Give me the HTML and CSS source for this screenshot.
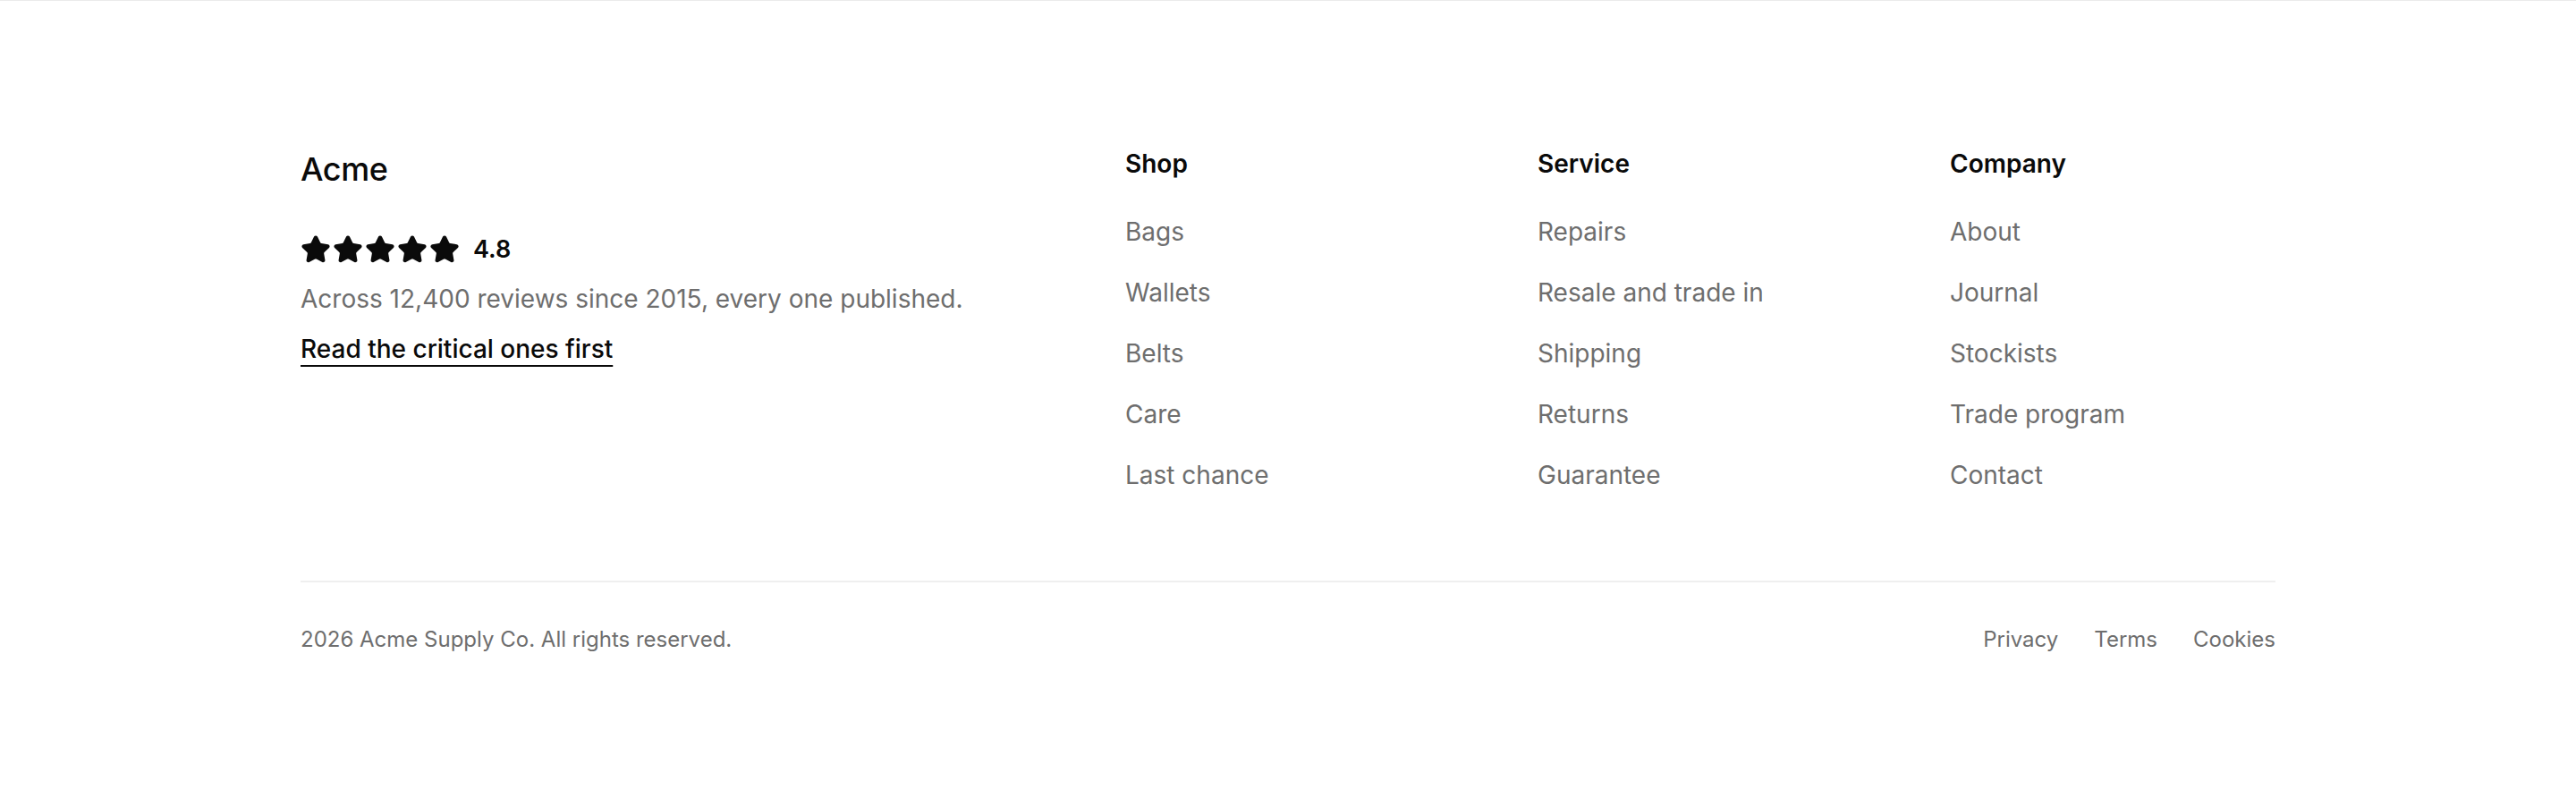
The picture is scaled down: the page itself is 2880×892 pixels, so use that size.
FILE: index.html
```html
<!DOCTYPE html>
<html lang="en">
<head>
<meta charset="utf-8">
<title>Acme footer</title>
<link rel="stylesheet" href="styles.css">
</head>
<body>
<footer class="footer">
  <div class="container">
    <div class="top">
      <div class="brand">
        <div class="logo">Acme</div>
        <div class="rating">
          <div class="stars">
            <svg class="star" viewBox="0 0 24 24"><path d="M11.525 2.295a.53.53 0 0 1 .95 0l2.31 4.679a2.123 2.123 0 0 0 1.595 1.16l5.166.756a.53.53 0 0 1 .294.904l-3.736 3.638a2.123 2.123 0 0 0-.611 1.878l.882 5.14a.53.53 0 0 1-.771.56l-4.618-2.428a2.122 2.122 0 0 0-1.973 0L6.396 21.01a.53.53 0 0 1-.77-.56l.881-5.139a2.122 2.122 0 0 0-.611-1.879L2.16 9.795a.53.53 0 0 1 .294-.906l5.165-.755a2.122 2.122 0 0 0 1.597-1.16z"/></svg>
            <svg class="star" viewBox="0 0 24 24"><path d="M11.525 2.295a.53.53 0 0 1 .95 0l2.31 4.679a2.123 2.123 0 0 0 1.595 1.16l5.166.756a.53.53 0 0 1 .294.904l-3.736 3.638a2.123 2.123 0 0 0-.611 1.878l.882 5.14a.53.53 0 0 1-.771.56l-4.618-2.428a2.122 2.122 0 0 0-1.973 0L6.396 21.01a.53.53 0 0 1-.77-.56l.881-5.139a2.122 2.122 0 0 0-.611-1.879L2.16 9.795a.53.53 0 0 1 .294-.906l5.165-.755a2.122 2.122 0 0 0 1.597-1.160z"/></svg>
            <svg class="star" viewBox="0 0 24 24"><path d="M11.525 2.295a.53.53 0 0 1 .95 0l2.31 4.679a2.123 2.123 0 0 0 1.595 1.16l5.166.756a.53.53 0 0 1 .294.904l-3.736 3.638a2.123 2.123 0 0 0-.611 1.878l.882 5.14a.53.53 0 0 1-.771.56l-4.618-2.428a2.122 2.122 0 0 0-1.973 0L6.396 21.01a.53.53 0 0 1-.77-.56l.881-5.139a2.122 2.122 0 0 0-.611-1.879L2.16 9.795a.53.53 0 0 1 .294-.906l5.165-.755a2.122 2.122 0 0 0 1.597-1.16z"/></svg>
            <svg class="star" viewBox="0 0 24 24"><path d="M11.525 2.295a.53.53 0 0 1 .95 0l2.31 4.679a2.123 2.123 0 0 0 1.595 1.16l5.166.756a.53.53 0 0 1 .294.904l-3.736 3.638a2.123 2.123 0 0 0-.611 1.878l.882 5.14a.53.53 0 0 1-.771.56l-4.618-2.428a2.122 2.122 0 0 0-1.973 0L6.396 21.01a.53.53 0 0 1-.77-.56l.881-5.139a2.122 2.122 0 0 0-.611-1.879L2.16 9.795a.53.53 0 0 1 .294-.906l5.165-.755a2.122 2.122 0 0 0 1.597-1.16z"/></svg>
            <svg class="star" viewBox="0 0 24 24"><path d="M11.525 2.295a.53.53 0 0 1 .95 0l2.31 4.679a2.123 2.123 0 0 0 1.595 1.16l5.166.756a.53.53 0 0 1 .294.904l-3.736 3.638a2.123 2.123 0 0 0-.611 1.878l.882 5.14a.53.53 0 0 1-.771.56l-4.618-2.428a2.122 2.122 0 0 0-1.973 0L6.396 21.01a.53.53 0 0 1-.77-.56l.881-5.139a2.122 2.122 0 0 0-.611-1.879L2.16 9.795a.53.53 0 0 1 .294-.906l5.165-.755a2.122 2.122 0 0 0 1.597-1.16z"/></svg>
          </div>
          <span class="score">4.8</span>
        </div>
        <p class="desc">Across 12,400 reviews since 2015, every one published.</p>
        <a class="cta" href="#">Read the critical ones first</a>
      </div>
      <nav class="col">
        <h3 class="col-title">Shop</h3>
        <ul class="links">
          <li><a href="#">Bags</a></li>
          <li><a href="#">Wallets</a></li>
          <li><a href="#">Belts</a></li>
          <li><a href="#">Care</a></li>
          <li><a href="#">Last chance</a></li>
        </ul>
      </nav>
      <nav class="col">
        <h3 class="col-title">Service</h3>
        <ul class="links">
          <li><a href="#">Repairs</a></li>
          <li><a href="#">Resale and trade in</a></li>
          <li><a href="#">Shipping</a></li>
          <li><a href="#">Returns</a></li>
          <li><a href="#">Guarantee</a></li>
        </ul>
      </nav>
      <nav class="col">
        <h3 class="col-title">Company</h3>
        <ul class="links">
          <li><a href="#">About</a></li>
          <li><a href="#">Journal</a></li>
          <li><a href="#">Stockists</a></li>
          <li><a href="#">Trade program</a></li>
          <li><a href="#">Contact</a></li>
        </ul>
      </nav>
    </div>
    <div class="bottom">
      <p class="copy">2026 Acme Supply Co. All rights reserved.</p>
      <div class="legal">
        <a href="#">Privacy</a>
        <a href="#">Terms</a>
        <a href="#">Cookies</a>
      </div>
    </div>
  </div>
</footer>
</body>
</html>
```

FILE: styles.css
```css
* { box-sizing: border-box; }

html, body {
  margin: 0;
  padding: 0;
  background: #ffffff;
}

body {
  font-family: Inter, "Noto Sans", "Liberation Sans", sans-serif;
  color: #0a0a0a;
}

a { text-decoration: none; color: inherit; }

.footer {
  border-top: 1px solid #ebebeb;
  padding-top: 162px;
}

.container {
  width: 2208px;
  margin: 0 auto;
}

.top {
  display: grid;
  grid-template-columns: minmax(0, 1fr) repeat(3, 364px);
  column-gap: 97px;
  align-items: start;
}

.logo {
  font-size: 36px;
  line-height: 54px;
  font-weight: 500;
  letter-spacing: -0.4px;
  color: #0a0a0a;
  margin-top: -1px;
}

.rating {
  display: flex;
  align-items: center;
  height: 40px;
  margin-top: 43px;
}

.stars {
  display: flex;
  gap: 2px;
}

.star {
  width: 34px;
  height: 34px;
  fill: #0a0a0a;
  stroke: #0a0a0a;
  stroke-width: 2;
  stroke-linejoin: round;
}

.score {
  margin-left: 15px;
  font-size: 27px;
  font-weight: 600;
  line-height: 40px;
  color: #0a0a0a;
}

.desc {
  margin: 15px 0 0;
  font-size: 28px;
  line-height: 40px;
  color: #6e6e6e;
}

.cta {
  display: inline-block;
  margin-top: 16px;
  font-size: 28px;
  line-height: 40px;
  font-weight: 500;
  color: #0a0a0a;
  text-decoration: underline;
  text-decoration-thickness: 2px;
  text-underline-offset: 8px;
}

.col-title {
  margin: 0;
  font-size: 28px;
  line-height: 40px;
  font-weight: 600;
  color: #0a0a0a;
}

.links {
  list-style: none;
  margin: 36px 0 0;
  padding: 0;
  display: flex;
  flex-direction: column;
  gap: 28px;
}

.links a {
  display: block;
  font-size: 28px;
  line-height: 40px;
  color: #6e6e6e;
}

.bottom {
  margin-top: 98px;
  border-top: 2px solid #efefef;
  padding-top: 46px;
  display: flex;
  justify-content: space-between;
  align-items: center;
}

.copy {
  margin: 0;
  font-size: 24px;
  line-height: 36px;
  color: #6e6e6e;
}

.legal {
  display: flex;
  gap: 40px;
}

.legal a {
  font-size: 24px;
  line-height: 36px;
  color: #6e6e6e;
}
```
